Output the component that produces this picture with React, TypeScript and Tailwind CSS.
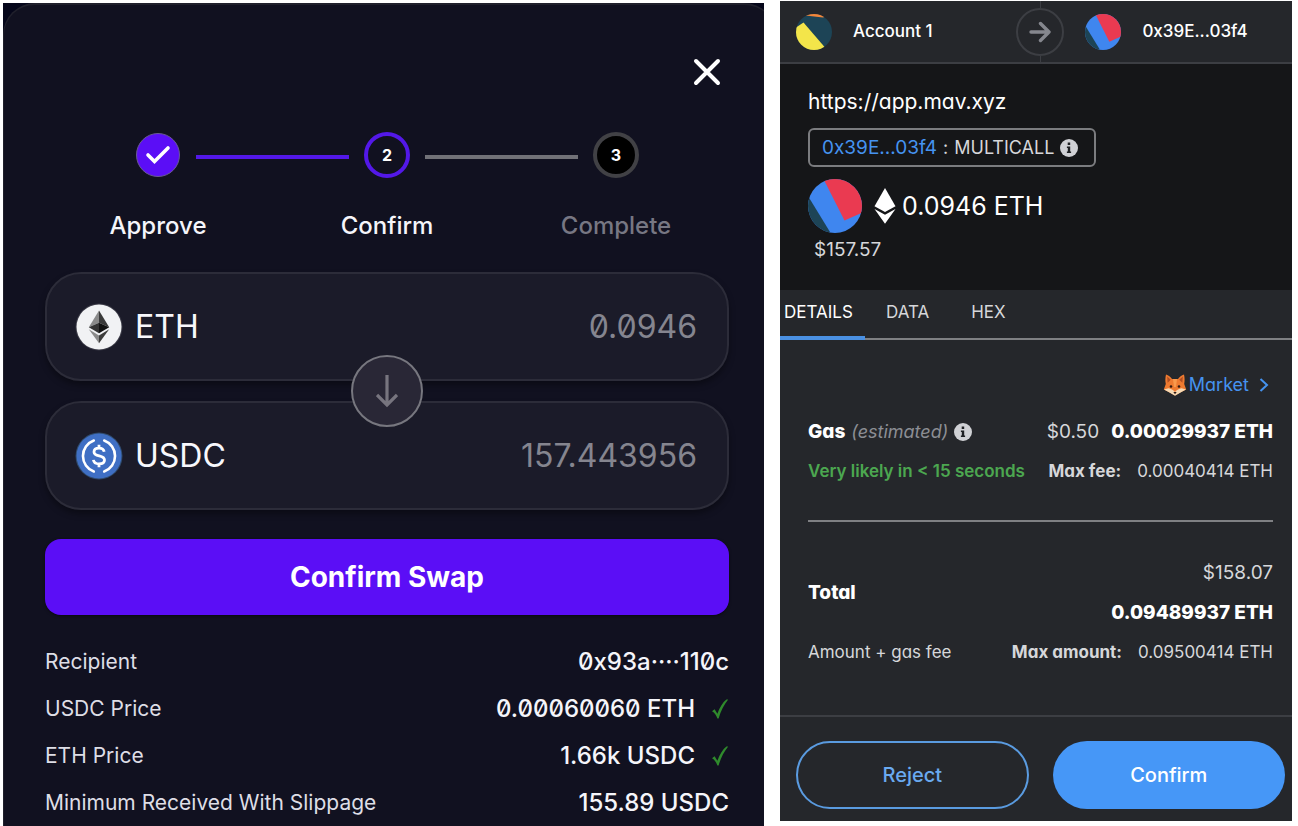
import type { ReactNode } from 'react';
import clsx from 'clsx';

interface Step {
  label: string;
  state: 'done' | 'current' | 'todo';
}

const steps: Step[] = [
  { label: 'Approve', state: 'done' },
  { label: 'Confirm', state: 'current' },
  { label: 'Complete', state: 'todo' },
];

const swapDetails = [
  { label: 'Recipient', value: '0x93a····110c', verified: false },
  { label: 'USDC Price', value: '0.00060060 ETH', verified: true },
  { label: 'ETH Price', value: '1.66k USDC', verified: true },
  { label: 'Minimum Received With Slippage', value: '155.89 USDC', verified: false },
];

const tabs = ['DETAILS', 'DATA', 'HEX'];

/* Icons */

function CloseIcon() {
  return (
    <svg viewBox="0 0 28 28" className="size-7" fill="none" stroke="white" strokeWidth="4" strokeLinecap="round">
      <path d="M3 3l22 22M25 3L3 25" />
    </svg>
  );
}

function EthCoin() {
  return (
    <svg viewBox="0 0 48 48" className="size-12 shrink-0">
      <circle cx="24" cy="24" r="23.5" fill="#3a3a46" />
      <circle cx="24" cy="24" r="22.5" fill="#f1f2f4" />
      <path d="M24 7.500L13.800 24.300 24 19.700z" fill="#8a8a8a" />
      <path d="M24 7.500L34.200 24.300 24 19.700z" fill="#3a3a3a" />
      <path d="M13.800 24.300L24 19.700v10.500z" fill="#343434" />
      <path d="M34.200 24.300L24 19.700v10.500z" fill="#121212" />
      <path d="M13.800 26.300L24 40.200v-7.800z" fill="#8a8a8a" />
      <path d="M34.200 26.300L24 40.200v-7.800z" fill="#3c3c3b" />
    </svg>
  );
}

function UsdcCoin() {
  return (
    <svg viewBox="0 0 48 48" className="size-12 shrink-0" fill="none" stroke="white">
      <circle cx="24" cy="24" r="23.5" fill="#2f4a6b" stroke="none" />
      <circle cx="24" cy="24" r="22.5" fill="#3f6fc4" stroke="none" />
      <path d="M18.800 8.500a16.500 16.500 0 0 0 0 31M29.200 8.500a16.500 16.500 0 0 1 0 31" strokeWidth="2.600" strokeLinecap="round" />
      <path d="M29.200 19.800c-.5-2.500-2.400-3.600-5.200-3.600-3 0-5 1.400-5 3.800 0 2.700 2.300 3.300 5.200 3.900 3 .7 5.300 1.500 5.300 4.100 0 2.500-2.200 3.900-5.500 3.900-3.100 0-5.200-1.400-5.600-4M24 12.800v3.400M24 31.900v3.300" strokeWidth="2.800" />
    </svg>
  );
}

function GreenTick() {
  return (
    <svg viewBox="0 0 18 22" className="h-[22px] w-[18px]" role="img" aria-label="Verified">
      <path d="M1 13.300l2.600-2.100 2.800 4.500C8.600 9.600 11.600 4.600 15.400 1.600h1.800C13.200 6.500 9.700 13 7.600 20.400H6.400C5.300 17.400 3.600 14.800 1 13.300z" fill="#2f8a2c" />
    </svg>
  );
}

function InfoIcon() {
  return (
    <svg viewBox="0 0 18 18" className="size-[18px] shrink-0">
      <circle cx="9" cy="9" r="9" fill="#d0d1d5" />
      <path d="M7.700 3.600h2.500v2.400H7.700zM6.900 7.500h3.300v4.900h.9v1.600H6.900v-1.600h.9V9.100h-.9z" fill="#1e2023" />
    </svg>
  );
}

function AccountAvatar() {
  return (
    <svg viewBox="0 0 36 36" className="size-9 shrink-0">
      <defs>
        <clipPath id="account-clip">
          <circle cx="18" cy="18" r="18" />
        </clipPath>
      </defs>
      <g clipPath="url(#account-clip)">
        <path d="M0 0h36v36H0z" fill="#1d4456" />
        <path d="M0 0h36L27 3.500 5 1z" fill="#f3863a" />
        <path d="M-8 19L7.500 8.500 29 33.500 18 44-8 40z" fill="#f3e54a" />
      </g>
    </svg>
  );
}

function ContractAvatar({ id, className }: { id: string; className: string }) {
  return (
    <svg viewBox="0 0 54 54" className={clsx('shrink-0', className)}>
      <defs>
        <clipPath id={id}>
          <circle cx="27" cy="27" r="27" />
        </clipPath>
      </defs>
      <g clipPath={`url(#${id})`}>
        <path d="M0 0h54v54H0z" fill="#3f86ef" />
        <path d="M15.500 0H60v31L36.500 41.500z" fill="#ea3a51" />
        <path d="M0 17l22 36-8 6H-4z" fill="#1d4456" />
      </g>
    </svg>
  );
}

function EthGlyph() {
  return (
    <svg viewBox="0 0 22 36" className="h-9 w-[22px] shrink-0" fill="white">
      <path d="M11 0l10.500 18.300L11 24 .5 18.300z" />
      <path d="M.5 21L11 26.700 21.500 21 11 35.800z" />
    </svg>
  );
}

function FoxIcon() {
  return (
    <svg viewBox="0 0 24 24" className="size-6 shrink-0">
      <path d="M3 1.500c2.500.8 4.500 2.300 6 4.500h6c1.500-2.200 3.500-3.700 6-4.500.8 3.500.8 6.500.2 9.500l2 5.500-5 2.500-6.200 3.500L5.800 19l-5-2.500 2-5.500c-.6-3-.6-6 .2-9.500z" fill="#ee7a30" />
      <path d="M4.200 3.500l3.600 3.200-3.200 3zM19.800 3.500l-3.600 3.200 3.200 3z" fill="#b04e22" />
      <path d="M1 16.500l4.500-1.300c2.500.3 4.500 1.500 6.500 3.800 2-2.300 4-3.500 6.500-3.800l4.500 1.300-5 2.700-6 3.600-6-3.600z" fill="#f6d9b4" />
      <path d="M10 6h4l-1 8h-2z" fill="#f99a4c" />
      <circle cx="8" cy="13.500" r="1.300" fill="#33190f" />
      <circle cx="16" cy="13.500" r="1.300" fill="#33190f" />
      <path d="M10.300 19h3.400L12 21.200z" fill="#2b1a16" />
    </svg>
  );
}

/* Swap dialog */

function StepCircle({ step, index }: { step: Step; index: number }) {
  return (
    <span
      className={clsx(
        'flex items-center justify-center rounded-full text-base font-bold text-white',
        step.state === 'done' && 'm-px size-11 border border-[#6a5a94] bg-[#5b0ef6]',
        step.state === 'current' && 'size-[46px] border-4 border-[#5318e8] bg-[#111120]',
        step.state === 'todo' && 'size-[46px] border-4 border-[#414145] bg-black',
      )}
    >
      {step.state === 'done' ? (
        <svg viewBox="0 0 26 20" className="h-5 w-[26px]" fill="none" stroke="white" strokeWidth="3.600" strokeLinecap="round">
          <path d="M3 10l6.500 6.500L23 3" />
        </svg>
      ) : (
        index + 1
      )}
    </span>
  );
}

function Stepper() {
  return (
    <ol className="flex justify-center px-[75px]">
      {steps.map((step, index) => (
        <li key={step.label} className={clsx('flex', index > 0 && 'flex-1')}>
          {index > 0 && (
            <span className={clsx('mt-[23px] h-1 flex-1', index === 1 ? 'bg-[#5318e8]' : 'bg-[#717177]')} />
          )}
          <div className="flex w-[76px] flex-col items-center">
            <StepCircle step={step} index={index} />
            <span
              className={clsx(
                'mt-8 text-2xl leading-8 font-medium whitespace-nowrap',
                step.state === 'todo' ? 'text-[#777783]' : 'text-[#f5f5fa]',
              )}
            >
              {step.label}
            </span>
          </div>
        </li>
      ))}
    </ol>
  );
}

function TokenBox({ icon, symbol, amount }: { icon: ReactNode; symbol: string; amount: string }) {
  return (
    <div className="flex h-[109px] items-center rounded-[36px] border-2 border-[#2c2c39] bg-[#1b1b29] pr-[30px] pl-7 text-[32px] leading-10 shadow-[0_4px_6px_rgba(0,0,0,0.35)]">
      {icon}
      <span className="ml-3 text-[#f8f8fc]">{symbol}</span>
      <span className="ml-auto text-[#85858f]">{amount}</span>
    </div>
  );
}

function SwapDialog() {
  return (
    <section className="mt-[3px] flex min-w-0 flex-[761] overflow-hidden bg-[#05061a] font-[Inter,sans-serif] slashed-zero">
      <div className="-mr-3 flex-1 rounded-t-[32px] border-t-2 border-l border-[#20202c] bg-[#111120] pr-[47px] pl-[41px]">
        <div className="flex justify-end pt-[53px] pr-2">
          <button type="button" aria-label="Close">
            <CloseIcon />
          </button>
        </div>

        <div className="mt-[46px]">
          <Stepper />
        </div>

        <div className="relative mt-[30px] flex flex-col gap-5">
          <TokenBox icon={<EthCoin />} symbol="ETH" amount="0.0946" />
          <TokenBox icon={<UsdcCoin />} symbol="USDC" amount="157.443956" />
          <button
            type="button"
            aria-label="Switch tokens"
            className="absolute top-1/2 left-1/2 flex size-[72px] -translate-x-1/2 -translate-y-1/2 items-center justify-center rounded-full border-2 border-[#77777f] bg-[#292736]"
          >
            <svg viewBox="0 0 22 34" className="h-[34px] w-[22px]" fill="none" stroke="#77757f" strokeWidth="3.200">
              <path d="M11 1v30M1 21l10 10 10-10" />
            </svg>
          </button>
        </div>

        <button
          type="button"
          className="mt-[29px] h-[76px] w-full rounded-2xl bg-[#5b0ef6] text-[28px] leading-8 font-bold text-white shadow-[0_1px_3px_rgba(0,0,0,0.5)]"
        >
          Confirm Swap
        </button>

        <dl className="mt-[29px] flex flex-col gap-[11px]">
          {swapDetails.map((row) => (
            <div key={row.label} className="flex h-9 items-center justify-between">
              <dt className="text-[21px] text-[#dedee6]">{row.label}</dt>
              <dd className="flex items-center gap-4 text-2xl font-medium text-[#f5f5fa]">
                {row.value}
                {row.verified && <GreenTick />}
              </dd>
            </div>
          ))}
        </dl>
      </div>
    </section>
  );
}

/* Wallet confirmation */

function WalletHeader() {
  return (
    <header className="flex h-[63px] border-b-2 border-[#3c3e43] text-[17px] font-medium text-white">
      <div className="flex flex-[240] items-center gap-[21px] pl-4">
        <AccountAvatar />
        Account 1
      </div>
      <div className="flex flex-col items-center">
        <span className="w-px flex-1 bg-[#3c3e43]" />
        <span className="flex size-12 items-center justify-center rounded-full border-2 border-[#3c3e43]">
          <svg viewBox="0 0 22 22" className="size-[22px]" fill="none" stroke="#85878e" strokeWidth="3.400" strokeLinejoin="round" strokeLinecap="round">
            <path d="M2 11h18M11.500 2.500L20 11l-8.500 8.500" />
          </svg>
        </span>
        <span className="w-px flex-1 bg-[#3c3e43]" />
      </div>
      <div className="flex flex-[225] items-center gap-[21px] pl-[21px]">
        <ContractAvatar id="contract-small" className="size-9" />
        0x39E...03f4
      </div>
    </header>
  );
}

function WalletConfirmation() {
  return (
    <section className="mt-px mb-1 min-w-0 flex-[512] self-start bg-[#25272b] font-[Inter,sans-serif] text-[#d6d7da] [font-feature-settings:'cv11','ss03']">
      <WalletHeader />

      <div className="flex h-[226px] flex-col items-start bg-[#151618] px-7 pt-[23px]">
        <p className="text-[21px] leading-[30px] text-white">https://app.mav.xyz</p>
        <div className="mt-[11px] flex h-[39px] items-center rounded-md border-2 border-[#7b7c7f] px-3 text-lg">
          <a href="#contract" className="text-[19px] text-[#4593f0]">0x39E...03f4</a>
          <span className="mx-1.5">:</span>
          MULTICALL
          <span className="mr-1 ml-1.5">
            <InfoIcon />
          </span>
        </div>
        <div className="mt-3 flex items-center">
          <ContractAvatar id="contract-large" className="size-[54px]" />
          <span className="ml-3">
            <EthGlyph />
          </span>
          <span className="ml-1.5 text-[25px] leading-8 text-white">0.0946 ETH</span>
        </div>
        <p className="mt-[3px] ml-1.5 text-[19px] leading-7">$157.57</p>
      </div>

      <div role="tablist" className="flex h-[50px] border-b-2 border-[#7f8083]">
        {tabs.map((tab, index) => (
          <button
            key={tab}
            type="button"
            role="tab"
            aria-selected={index === 0}
            className={clsx(
              '-mb-0.5 border-b-4 text-[17px]',
              index === 0 && 'w-[85px] border-[#4a90e2] pl-1 text-left text-white',
              index > 0 && 'border-transparent px-[21px]',
            )}
          >
            {tab}
          </button>
        ))}
      </div>

      <div className="px-7 pr-[19px]">
        <div className="flex justify-end pt-[31px]">
          <button type="button" className="flex h-7 items-center text-lg text-[#4593f0]">
            <FoxIcon />
            <span className="ml-0.5">Market</span>
            <svg viewBox="0 0 10 14" className="mr-1 ml-2.5 h-3.5 w-2.5" fill="none" stroke="currentColor" strokeWidth="2">
              <path d="M1.500 1l6.500 6-6.500 6" />
            </svg>
          </button>
        </div>

        <div className="mt-[17px] flex h-8 items-center text-[19px]">
          <b className="font-extrabold text-white">Gas</b>
          <i className="ml-1.5 text-lg text-[#8c8e94]">(estimated)</i>
          <span className="ml-1.5">
            <InfoIcon />
          </span>
          <span className="ml-auto">$0.50</span>
          <b className="ml-3 font-extrabold text-white">0.00029937 ETH</b>
        </div>
        <div className="mt-2 flex h-8 items-center text-[17px] whitespace-nowrap">
          <b className="font-semibold text-[#4ca750]">Very likely in &lt; 15 seconds</b>
          <b className="ml-auto font-bold">Max fee:</b>
          <span className="ml-4">0.00040414 ETH</span>
        </div>

        <hr className="mt-8 border-t-2 border-[#7f8083]" />

        <div className="mt-[35px] flex h-[72px] items-center justify-between text-[19px]">
          <b className="font-extrabold text-white">Total</b>
          <div className="flex flex-col gap-2 text-right leading-8">
            <span>$158.07</span>
            <b className="font-extrabold text-white">0.09489937 ETH</b>
          </div>
        </div>
        <div className="mt-2 flex h-8 items-center text-[17px] whitespace-nowrap">
          <span>Amount + gas fee</span>
          <b className="ml-auto font-bold">Max amount:</b>
          <span className="ml-4">0.09500414 ETH</span>
        </div>
      </div>

      <footer className="mt-[46px] grid grid-cols-2 gap-6 border-t-2 border-[#3c3e43] pt-6 pr-[7px] pb-3 pl-4 text-xl font-medium">
        <button type="button" className="h-[68px] rounded-full border-2 border-[#5a9be0] text-[#6aaaf0]">
          Reject
        </button>
        <button type="button" className="h-[68px] rounded-full bg-[#4697f7] text-white">
          Confirm
        </button>
      </footer>
    </section>
  );
}

export default function App() {
  return (
    <main className="flex min-h-screen gap-4 bg-white pr-1.5 pl-[3px]">
      <SwapDialog />
      <WalletConfirmation />
    </main>
  );
}
